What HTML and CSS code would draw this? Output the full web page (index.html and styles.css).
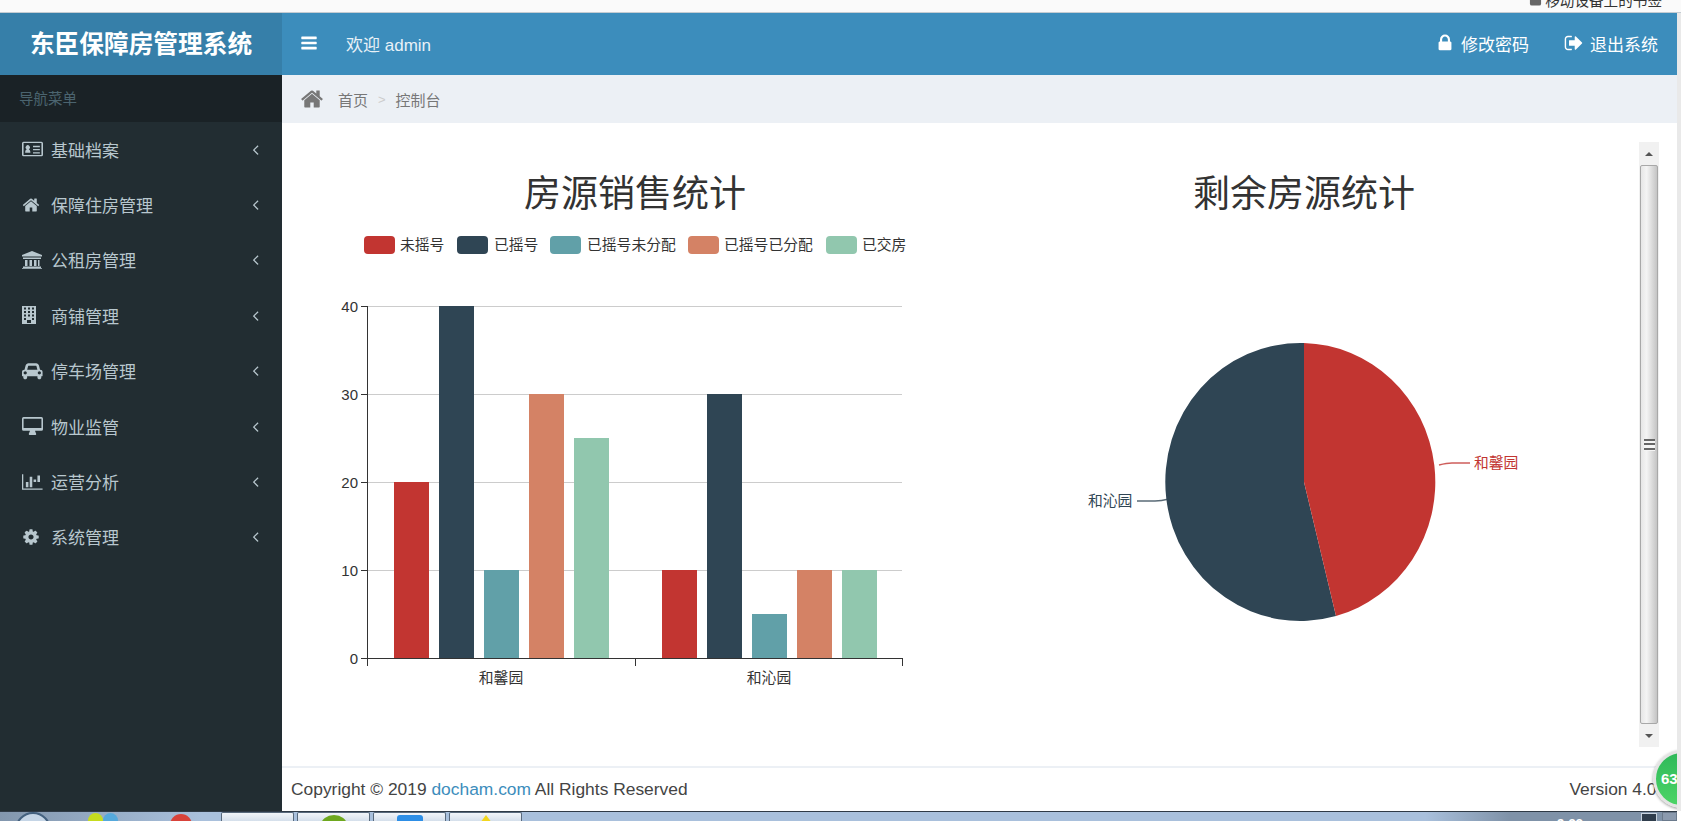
FILE: index.html
```html
<!DOCTYPE html>
<html lang="zh-CN">
<head>
  <meta charset="UTF-8" />
  <title>东臣保障房管理系统</title>
  <link rel="stylesheet" href="styles.css">
</head>
<body>
  <div class="bookmarks">
    <span class="bookmark-label">
      <svg class="bookmark-icon" viewBox="0 0 14 14"><rect x="1" y="0" width="12" height="14" rx="2"/></svg>
      移动设备上的书签
    </span>
  </div>

  <div class="window">
    <div class="app">
      <aside class="sidebar">
        <div class="logo">东臣保障房管理系统</div>
        <div class="nav-header">导航菜单</div>
        <ul class="nav">
          <li>
            <svg class="nav-icon" viewBox="0 0 20 16" preserveAspectRatio="xMinYMid"><path fill-rule="evenodd" d="M1.5 1h17A1.5 1.5 0 0 1 20 2.500v11a1.500 1.500 0 0 1-1.500 1.500h-17A1.500 1.500 0 0 1 0 13.500v-11A1.500 1.500 0 0 1 1.500 1zm0 1.300v11.400h17V2.300zM3 11.500c0-2 .8-3 1.500-3.300a2 2 0 1 1 2 0c.7.300 1.500 1.300 1.500 3.300zM10.500 5H17v1.300h-6.500zm0 3H17v1.300h-6.500zm0 3H17v1.300h-6.500z"/></svg>
            <span>基础档案</span>
            <svg class="nav-arrow" viewBox="0 0 1792 1792"><path d="M1203 544q0 13-10 23l-393 393 393 393q10 10 10 23t-10 23l-50 50q-10 10-23 10t-23-10l-466-466q-10-10-10-23t10-23l466-466q10-10 23-10t23 10l50 50q10 10 10 23z"/></svg>
          </li>
          <li>
            <svg class="nav-icon" viewBox="0 0 1792 1792" preserveAspectRatio="xMinYMid"><path d="M1472 992v480q0 26-19 45t-45 19h-384v-384h-256v384h-384q-26 0-45-19t-19-45v-480q0-1 .5-3t.5-3l575-474 575 474q1 2 1 6zm223-69l-62 74q-8 9-21 11h-3q-13 0-21-7l-692-577-692 577q-12 8-24 7-13-2-21-11l-62-74q-8-10-7-23.500t11-21.500l719-599q32-26 76-26t76 26l244 204v-195q0-14 9-23t23-9h192q14 0 23 9t9 23v408l219 182q10 8 11 21.500t-7 23.500z"/></svg>
            <span>保障住房管理</span>
            <svg class="nav-arrow" viewBox="0 0 1792 1792"><path d="M1203 544q0 13-10 23l-393 393 393 393q10 10 10 23t-10 23l-50 50q-10 10-23 10t-23-10l-466-466q-10-10-10-23t10-23l466-466q10-10 23-10t23 10l50 50q10 10 10 23z"/></svg>
          </li>
          <li>
            <svg class="nav-icon" viewBox="0 0 20 18" preserveAspectRatio="xMinYMid"><path d="M10 0l10 4v1.500H0V4zM1 6.500h18V8H1zM3 9h2.500v6H3zm4.500 0H10v6H7.500zm4.500 0h2.500v6H12zm4 0h1.500v6H16zM1 15.500h18V17H1zM0 17.200h20V18H0z"/></svg>
            <span>公租房管理</span>
            <svg class="nav-arrow" viewBox="0 0 1792 1792"><path d="M1203 544q0 13-10 23l-393 393 393 393q10 10 10 23t-10 23l-50 50q-10 10-23 10t-23-10l-466-466q-10-10-10-23t10-23l466-466q10-10 23-10t23 10l50 50q10 10 10 23z"/></svg>
          </li>
          <li>
            <svg class="nav-icon" viewBox="0 0 20 18" preserveAspectRatio="xMinYMid"><path fill-rule="evenodd" d="M0 0h14v18H0zm2 1.500v2h2v-2zm4 0v2h2v-2zm4 0v2h2v-2zM2 5v2h2V5zm4 0v2h2V5zm4 0v2h2V5zM2 8.500v2h2v-2zm4 0v2h2v-2zm4 0v2h2v-2zM2 12v2h2v-2zm8 0v2h2v-2zM5 14v3h4v-3z"/></svg>
            <span>商铺管理</span>
            <svg class="nav-arrow" viewBox="0 0 1792 1792"><path d="M1203 544q0 13-10 23l-393 393 393 393q10 10 10 23t-10 23l-50 50q-10 10-23 10t-23-10l-466-466q-10-10-10-23t10-23l466-466q10-10 23-10t23 10l50 50q10 10 10 23z"/></svg>
          </li>
          <li>
            <svg class="nav-icon" viewBox="0 0 2048 1792" preserveAspectRatio="xMinYMid"><path d="M480 1088q0-66-47-113t-113-47-113 47-47 113 47 113 113 47 113-47 47-113zm36-320h1016l-89-357q-2-8-14-17.500t-21-9.500h-768q-9 0-21 9.500t-14 17.500zm1372 320q0-66-47-113t-113-47-113 47-47 113 47 113 113 47 113-47 47-113zm160-96v384q0 14-9 23t-23 9h-96v128q0 80-56 136t-136 56-136-56-56-136v-128h-1024v128q0 80-56 136t-136 56-136-56-56-136v-128h-96q-14 0-23-9t-9-23v-384q0-93 65.500-158.500t158.500-65.500h28l105-419q23-94 104-157.500t179-63.500h768q98 0 179 63.500t104 157.500l105 419h28q93 0 158.500 65.500t65.500 158.500z"/></svg>
            <span>停车场管理</span>
            <svg class="nav-arrow" viewBox="0 0 1792 1792"><path d="M1203 544q0 13-10 23l-393 393 393 393q10 10 10 23t-10 23l-50 50q-10 10-23 10t-23-10l-466-466q-10-10-10-23t10-23l466-466q10-10 23-10t23 10l50 50q10 10 10 23z"/></svg>
          </li>
          <li>
            <svg class="nav-icon" viewBox="0 0 20 17" preserveAspectRatio="xMinYMid"><path fill-rule="evenodd" d="M1.500 0h17A1.500 1.500 0 0 1 20 1.500v10a1.500 1.500 0 0 1-1.500 1.500H12.500c0 1.500 1 2 1 3 0 .5-.3 1-.8 1H7.300c-.5 0-.8-.5-.8-1 0-1 1-1.500 1-3H1.500A1.500 1.500 0 0 1 0 11.500v-10A1.500 1.500 0 0 1 1.500 0zm0 1.500v9h17v-9z"/></svg>
            <span>物业监管</span>
            <svg class="nav-arrow" viewBox="0 0 1792 1792"><path d="M1203 544q0 13-10 23l-393 393 393 393q10 10 10 23t-10 23l-50 50q-10 10-23 10t-23-10l-466-466q-10-10-10-23t10-23l466-466q10-10 23-10t23 10l50 50q10 10 10 23z"/></svg>
          </li>
          <li>
            <svg class="nav-icon" viewBox="0 0 2048 1792" preserveAspectRatio="xMinYMid"><path d="M640 896v512h-256v-512h256zm384-512v1024h-256v-1024h256zm1024 1152v128h-2048v-1536h128v1408h1920zm-640-896v256h-256v-256h256zm384-384v640h-256v-640h256z"/></svg>
            <span>运营分析</span>
            <svg class="nav-arrow" viewBox="0 0 1792 1792"><path d="M1203 544q0 13-10 23l-393 393 393 393q10 10 10 23t-10 23l-50 50q-10 10-23 10t-23-10l-466-466q-10-10-10-23t10-23l466-466q10-10 23-10t23 10l50 50q10 10 10 23z"/></svg>
          </li>
          <li>
            <svg class="nav-icon" viewBox="0 0 1792 1792" preserveAspectRatio="xMinYMid"><path d="M1152 896q0-106-75-181t-181-75-181 75-75 181 75 181 181 75 181-75 75-181zm512-109v222q0 12-8 23t-20 13l-185 28q-19 54-39 91 35 50 107 138 10 12 10 25t-9 23q-27 37-99 108t-94 71q-12 0-26-9l-138-108q-44 23-91 38-16 136-29 186-7 28-36 28h-222q-14 0-24.500-8.500t-11.500-21.500l-28-184q-49-16-90-37l-141 107q-10 9-25 9-14 0-25-11-126-114-165-168-7-10-7-23 0-12 8-23 15-21 51-66.500t54-70.500q-27-50-41-99l-183-27q-13-2-21-12.500t-8-23.500v-222q0-12 8-23t19-13l186-28q14-46 39-92-40-57-107-138-10-12-10-24 0-10 9-23 26-36 98.500-107.500t94.500-71.500q13 0 26 10l138 107q44-23 91-38 16-136 29-186 7-28 36-28h222q14 0 24.500 8.500t11.500 21.500l28 184q49 16 90 37l142-107q9-9 24-9 13 0 25 10 129 119 165 170 7 8 7 22 0 12-8 23-15 21-51 66.500t-54 70.500q26 50 41 98l183 28q13 2 21 12.500t8 23.500z"/></svg>
            <span>系统管理</span>
            <svg class="nav-arrow" viewBox="0 0 1792 1792"><path d="M1203 544q0 13-10 23l-393 393 393 393q10 10 10 23t-10 23l-50 50q-10 10-23 10t-23-10l-466-466q-10-10-10-23t10-23l466-466q10-10 23-10t23 10l50 50q10 10 10 23z"/></svg>
          </li>
        </ul>
      </aside>

      <div class="main">
        <header class="topbar">
          <svg class="menu-toggle" viewBox="0 0 1792 1792"><path d="M1664 1344v128q0 26-19 45t-45 19h-1408q-26 0-45-19t-19-45v-128q0-26 19-45t45-19h1408q26 0 45 19t19 45zm0-512v128q0 26-19 45t-45 19h-1408q-26 0-45-19t-19-45v-128q0-26 19-45t45-19h1408q26 0 45 19t19 45zm0-512v128q0 26-19 45t-45 19h-1408q-26 0-45-19t-19-45v-128q0-26 19-45t45-19h1408q26 0 45 19t19 45z"/></svg>
          <span class="welcome">欢迎 admin</span>
          <span class="topbar-link change-pwd">
            <svg class="topbar-icon" viewBox="0 0 1792 1792"><path d="M640 768h512v-192q0-106-75-181t-181-75-181 75-75 181v192zm832 96v576q0 40-28 68t-68 28h-960q-40 0-68-28t-28-68v-576q0-40 28-68t68-28h32v-192q0-184 132-316t316-132 316 132 132 316v192h32q40 0 68 28t28 68z"/></svg>
            修改密码
          </span>
          <span class="topbar-link">
            <svg class="topbar-icon" viewBox="0 0 1792 1792"><path d="M704 1440q0 4 1 20t.5 26.500-3 23.500-10 19.500-20.500 6.500h-320q-119 0-203.500-84.500t-84.500-203.500v-704q0-119 84.500-203.500t203.500-84.500h320q13 0 22.500 9.500t9.500 22.500q0 4 1 20t.5 26.500-3 23.500-10 19.500-20.500 6.500h-320q-66 0-113 47t-47 113v704q0 66 47 113t113 47h312l11.500 1 11.500 3 8 5.500 7 9 2 13.500zm928-544q0 26-19 45l-544 544q-19 19-45 19t-45-19-19-45v-288h-448q-26 0-45-19t-19-45v-384q0-26 19-45t45-19h448v-288q0-26 19-45t45-19 45 19l544 544q19 19 19 45z"/></svg>
            退出系统
          </span>
        </header>

        <nav class="breadcrumb">
          <svg class="crumb-home" viewBox="0 0 1792 1792"><path d="M1472 992v480q0 26-19 45t-45 19h-384v-384h-256v384h-384q-26 0-45-19t-19-45v-480q0-1 .5-3t.5-3l575-474 575 474q1 2 1 6zm223-69l-62 74q-8 9-21 11h-3q-13 0-21-7l-692-577-692 577q-12 8-24 7-13-2-21-11l-62-74q-8-10-7-23.500t11-21.500l719-599q32-26 76-26t76 26l244 204v-195q0-14 9-23t23-9h192q14 0 23 9t9 23v408l219 182q10 8 11 21.500t-7 23.500z"/></svg>
          <span>首页</span>
          <span class="crumb-sep">&gt;</span>
          <span>控制台</span>
        </nav>

        <section class="content">
          <div class="charts">
            <svg class="chart chart-bar" viewBox="0 0 680 605">
              <text class="chart-title" x="353" y="65">房源销售统计</text>

              <rect class="c1" x="82" y="94" width="31" height="18" rx="4"/>
              <text class="legend" x="118" y="108">未摇号</text>
              <rect class="c2" x="175" y="94" width="31" height="18" rx="4"/>
              <text class="legend" x="212" y="108">已摇号</text>
              <rect class="c3" x="268" y="94" width="31" height="18" rx="4"/>
              <text class="legend" x="305" y="108">已摇号未分配</text>
              <rect class="c4" x="406" y="94" width="31" height="18" rx="4"/>
              <text class="legend" x="442" y="108">已摇号已分配</text>
              <rect class="c5" x="544" y="94" width="31" height="18" rx="4"/>
              <text class="legend" x="580" y="108">已交房</text>

              <g class="grid">
                <line x1="86" x2="620" y1="164.500" y2="164.500"/>
                <line x1="86" x2="620" y1="252.500" y2="252.500"/>
                <line x1="86" x2="620" y1="340.500" y2="340.500"/>
                <line x1="86" x2="620" y1="428.500" y2="428.500"/>
              </g>

              <rect class="c1" x="112" y="340" width="35" height="176"/>
              <rect class="c2" x="157" y="164" width="35" height="352"/>
              <rect class="c3" x="202" y="428" width="35" height="88"/>
              <rect class="c4" x="247" y="252" width="35" height="264"/>
              <rect class="c5" x="292" y="296" width="35" height="220"/>

              <rect class="c1" x="380" y="428" width="35" height="88"/>
              <rect class="c2" x="425" y="252" width="35" height="264"/>
              <rect class="c3" x="470" y="472" width="35" height="44"/>
              <rect class="c4" x="515" y="428" width="35" height="88"/>
              <rect class="c5" x="560" y="428" width="35" height="88"/>

              <g class="axis">
                <line x1="85.500" x2="85.500" y1="164" y2="524"/>
                <line x1="79" x2="621" y1="516.500" y2="516.500"/>
                <line x1="79" x2="85" y1="164.500" y2="164.500"/>
                <line x1="79" x2="85" y1="252.500" y2="252.500"/>
                <line x1="79" x2="85" y1="340.500" y2="340.500"/>
                <line x1="79" x2="85" y1="428.500" y2="428.500"/>
                <line x1="353.500" x2="353.500" y1="516" y2="524"/>
                <line x1="620.500" x2="620.500" y1="516" y2="524"/>
              </g>

              <text class="tick" x="76" y="169.500">40</text>
              <text class="tick" x="76" y="257.500">30</text>
              <text class="tick" x="76" y="345.500">20</text>
              <text class="tick" x="76" y="433.500">10</text>
              <text class="tick" x="76" y="521.500">0</text>
              <text class="cat" x="219" y="540.500">和馨园</text>
              <text class="cat" x="487" y="540.500">和沁园</text>
            </svg>

            <svg class="chart chart-pie" viewBox="0 0 680 605">
              <text class="chart-title" x="342" y="65">剩余房源统计</text>
              <path class="c2" d="M342 340 L374 474 A135 139 0 1 1 342 201 Z"/>
              <path class="c1" d="M342 340 L342 201 A135 139 0 0 1 374 474 Z"/>
              <path class="leader-red" d="M477 323 Q485 321 490 321 H508"/>
              <path class="leader-dark" d="M207 357 Q199 359 193 359 H175"/>
              <text class="pie-label red" x="512" y="326">和馨园</text>
              <text class="pie-label dark" x="126" y="364">和沁园</text>
            </svg>
          </div>

          <div class="scrollbar">
            <div class="scroll-btn"><span class="arrow-up"></span></div>
            <div class="scroll-thumb"><span class="grip"></span></div>
            <div class="scroll-btn"><span class="arrow-down"></span></div>
          </div>
        </section>

        <footer class="footer">
          <span>Copyright © 2019 <a class="footer-link">docham.com</a> All Rights Reserved</span>
          <span>Version 4.0.0</span>
        </footer>
      </div>

      <div class="meter">63</div>
    </div>
  </div>

  <div class="taskbar">
    <span class="start-orb"></span>
    <span class="tray-dot yellow"></span>
    <span class="tray-dot blue"></span>
    <span class="tray-dot red"></span>
    <span class="task-tab first"></span>
    <span class="task-tab"><span class="tab-icon green"></span></span>
    <span class="task-tab"><span class="tab-icon blue-box"></span></span>
    <span class="task-tab"><span class="tab-icon star"></span></span>
    <span class="clock">9:33</span>
    <span class="tray-box"></span>
    <span class="show-desktop"></span>
  </div>
</body>
</html>
```

FILE: styles.css
```css
* {
  box-sizing: border-box;
}
html, body {
  margin: 0;
  height: 830px;
  overflow: hidden;
  background: #fff;
}
body {
  font-family: "Liberation Sans", "Noto Sans CJK SC", sans-serif;
  display: flex;
  flex-direction: column;
  width: 1681px;
}

/* browser chrome left over at the top of the shot */
.bookmarks {
  height: 13px;
  flex: none;
  background: #fafafa;
  border-bottom: 1px solid #c4ccd2;
  display: flex;
  justify-content: flex-end;
  padding-right: 19px;
  overflow: hidden;
  font-size: 14.600px;
  color: #333;
}
.bookmark-label {
  display: flex;
  align-items: center;
  gap: 3px;
  height: 16px;
  margin-top: -9px;
}
.bookmark-icon {
  width: 13px;
  height: 14px;
  fill: #666;
}

.window {
  flex: none;
  height: 798px;
  overflow: hidden;
  background: #e9e9e9;
  padding-right: 4px;
}
.app {
  display: flex;
  height: 100%;
  background: #fff;
  position: relative;
  overflow: hidden;
}

.sidebar {
  width: 282px;
  flex: none;
  background: #222d32;
}
.logo {
  height: 62px;
  background: #367fa9;
  color: #fff;
  font-size: 24.700px;
  font-weight: bold;
  line-height: 63px;
  text-align: center;
}
.nav-header {
  height: 47px;
  background: #1a2226;
  color: #4b646f;
  font-size: 14.500px;
  line-height: 49px;
  padding-left: 19px;
}
.nav {
  list-style: none;
  margin: 0;
  padding: 0;
}
.nav li {
  height: 55.400px;
  display: flex;
  align-items: center;
  padding: 0 18px 1px 22px;
  color: #b8c7ce;
  font-size: 17px;
}
.nav li span {
  flex: 1;
}
.nav-icon {
  width: 21px;
  height: 18px;
  margin-right: 8px;
  fill: #b8c7ce;
}
.nav-arrow {
  width: 17px;
  height: 17px;
  fill: #b8c7ce;
}

.main {
  flex: 1;
  min-width: 0;
  display: flex;
  flex-direction: column;
}
.topbar {
  height: 62px;
  flex: none;
  background: #3c8dbc;
  color: #fff;
  display: flex;
  align-items: center;
  padding: 0 19px 2px 18px;
  font-size: 17px;
}
.menu-toggle {
  width: 18px;
  height: 18px;
  fill: #fff;
  margin-right: 28px;
}
.welcome {
  flex: 1;
  color: #e8f1f7;
}
.topbar-link {
  display: flex;
  align-items: center;
  gap: 6px;
}
.change-pwd {
  margin-right: 35px;
}
.topbar-icon {
  width: 20px;
  height: 20px;
  fill: #fff;
}

.breadcrumb {
  height: 48px;
  flex: none;
  background: #ecf0f5;
  display: flex;
  align-items: center;
  padding-left: 18px;
  font-size: 15px;
  color: #777;
}
.crumb-home {
  width: 24px;
  height: 24px;
  fill: #777;
  margin-right: 14px;
}
.crumb-sep {
  color: #ccc;
  font-size: 13px;
  margin: 0 10px;
}

.content {
  flex: 1;
  min-height: 0;
  display: flex;
  padding: 19px 18px 19px 0;
}
.charts {
  flex: 1;
  min-width: 0;
  display: grid;
  grid-template-columns: 680px 677px;
}
.chart {
  width: 680px;
  height: 605px;
  display: block;
  overflow: visible;
}
.chart-title {
  font-size: 37px;
  fill: #333;
  text-anchor: middle;
}
.legend {
  font-size: 14.800px;
  fill: #333;
}
.c1 { fill: #c23531; }
.c2 { fill: #2f4554; }
.c3 { fill: #61a0a8; }
.c4 { fill: #d48265; }
.c5 { fill: #91c7ae; }
.grid line {
  stroke: #ccc;
  stroke-width: 1;
}
.axis line {
  stroke: #333;
  stroke-width: 1;
}
.tick {
  font-size: 15px;
  fill: #333;
  text-anchor: end;
}
.cat {
  font-size: 14.800px;
  fill: #333;
  text-anchor: middle;
}
.leader-red {
  fill: none;
  stroke: #c23531;
  stroke-width: 1.500;
  opacity: 0.8;
}
.leader-dark {
  fill: none;
  stroke: #2f4554;
  stroke-width: 1.500;
  opacity: 0.8;
}
.pie-label {
  font-size: 14.800px;
}
.pie-label.red {
  fill: #c23531;
}
.pie-label.dark {
  fill: #2f4554;
}

.scrollbar {
  width: 20px;
  flex: none;
  height: 605px;
  display: flex;
  flex-direction: column;
  background: #f1f1f1;
}
.scroll-btn {
  height: 23px;
  flex: none;
  display: flex;
  align-items: center;
  justify-content: center;
}
.scroll-thumb {
  flex: 1;
  border: 1px solid #a8a8a8;
  border-radius: 2px;
  margin: 0 1px;
  background: linear-gradient(90deg, #e6e6e6, #f4f4f4 35%, #c4c4c4);
  display: flex;
  align-items: center;
  justify-content: center;
}
.grip {
  width: 11px;
  height: 12px;
  background: repeating-linear-gradient(#666 0, #666 2px, #f4f4f4 2px, #f4f4f4 4.500px);
}
.arrow-up {
  border: 4px solid transparent;
  border-top: 0;
  border-bottom: 4px solid #555;
}
.arrow-down {
  border: 4px solid transparent;
  border-bottom: 0;
  border-top: 4px solid #555;
}

.footer {
  height: 45px;
  flex: none;
  border-top: 2px solid #ecf0f5;
  display: flex;
  justify-content: space-between;
  align-items: center;
  padding: 0 6px 0 9px;
  font-size: 17.400px;
  color: #444;
  background: #fff;
}
.footer-link {
  color: #3c8dbc;
}

/* desktop widget sitting over the corner of the window */
.meter {
  position: absolute;
  left: 1653px;
  top: 737px;
  width: 58px;
  height: 58px;
  border-radius: 50%;
  background: linear-gradient(#2fb95a, #4cd466);
  border: 3px solid #e4e4e4;
  box-shadow: 0 1px 3px rgba(0, 0, 0, 0.4);
  color: #fff;
  font-size: 15px;
  font-weight: bold;
  line-height: 52px;
  padding-left: 5px;
}

.taskbar {
  flex: none;
  height: 10px;
  width: 1677px;
  display: flex;
  overflow: hidden;
  background: linear-gradient(90deg, #8296ad 0, #a9c0dc 12%, #a9c0dc 85%, #7f92a8 90%);
  border-top: 1px solid #2f3a46;
  padding-left: 15px;
}
.start-orb {
  width: 36px;
  height: 36px;
  border-radius: 50%;
  background: #c5d5e6;
  border: 2px solid #44617f;
  margin-right: 37px;
}
.tray-dot {
  width: 15px;
  height: 15px;
  border-radius: 50%;
  margin-top: 1px;
}
.tray-dot.yellow {
  background: #c6dc1e;
}
.tray-dot.blue {
  background: #55a9dc;
  margin-right: 52px;
}
.tray-dot.red {
  width: 22px;
  height: 22px;
  background: #d8423a;
  margin-top: 2px;
  margin-right: 29px;
}
.task-tab {
  width: 73px;
  margin-right: 3px;
  background: linear-gradient(#f2f5f9, #d5dfeb);
  border: 1px solid #58697c;
  border-bottom: 0;
  border-radius: 2px 2px 0 0;
  display: flex;
  justify-content: center;
}
.tab-icon {
  display: block;
  margin-top: 2px;
  width: 26px;
  height: 20px;
}
.tab-icon.green {
  border-radius: 50%;
  background: #6ea81e;
}
.tab-icon.blue-box {
  border-radius: 3px;
  background: #2d8ee6;
}
.tab-icon.star {
  width: 0;
  height: 0;
  border: 6px solid transparent;
  border-top: 0;
  border-bottom: 8px solid #f2d61e;
}
.clock {
  margin-left: auto;
  margin-right: 58px;
  padding-top: 6px;
  color: #fff;
  font-size: 13px;
  font-weight: bold;
  line-height: 11px;
}
.tray-box {
  width: 16px;
  height: 9px;
  margin-right: 5px;
  margin-top: 1px;
  background: #2f3d4c;
  border: 1px solid #c9d3de;
}
.show-desktop {
  width: 15px;
  background: #8b9aae;
  border: 1px solid #6b7a8c;
}
```
